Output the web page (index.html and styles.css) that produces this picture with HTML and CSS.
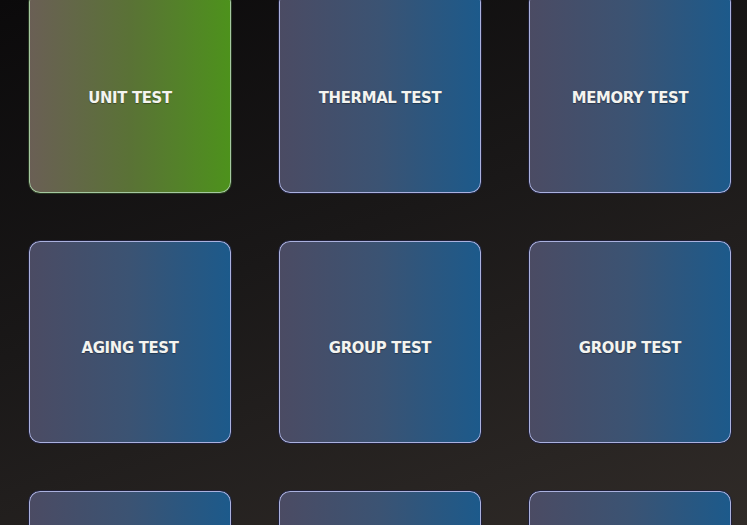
FILE: index.html
```html
<!DOCTYPE html>
<html>
<head>
<meta charset="utf-8">
<link rel="stylesheet" href="styles.css">
</head>
<body>
<div class="grid">
  <div class="tile tile-green"><span class="label">UNIT TEST</span></div>
  <div class="tile"><span class="label">THERMAL TEST</span></div>
  <div class="tile"><span class="label">MEMORY TEST</span></div>
  <div class="tile"><span class="label">AGING TEST</span></div>
  <div class="tile"><span class="label">GROUP TEST</span></div>
  <div class="tile"><span class="label">GROUP TEST</span></div>
  <div class="tile"></div>
  <div class="tile"></div>
  <div class="tile"></div>
</div>
</body>
</html>
```

FILE: styles.css
```css
html, body {
  margin: 0;
  padding: 0;
  height: 100%;
  overflow: hidden;
}
body {
  background: linear-gradient(160deg, #0b0a0b 0%, #1a1818 45%, #302b28 100%);
  font-family: "DejaVu Sans Condensed", "DejaVu Sans", sans-serif;
}
.grid {
  display: grid;
  grid-template-columns: repeat(3, 204px);
  grid-auto-rows: 204px;
  column-gap: 46px;
  row-gap: 46px;
  padding-left: 28px;
  margin-top: -10px;
}
.tile {
  box-sizing: border-box;
  border-radius: 12px;
  border: 1px solid #1f1f38;
  box-shadow: inset 0 0 0 1px #aab1de;
  background: linear-gradient(90deg, #4b4b63 0%, #3b5373 50%, #1c5a8b 100%);
  display: flex;
  align-items: center;
  justify-content: center;
}
.tile-green {
  border-color: #283822;
  box-shadow: inset 0 0 0 1px #a5c8a0;
  background: linear-gradient(90deg, #6a5f55 0%, #5a7236 50%, #4d921c 100%);
}
.label {
  color: #f4f4f0;
  font-weight: bold;
  font-size: 16.5px;
  letter-spacing: -0.3px;
  text-shadow: 0 1px 1px rgba(0,0,0,0.35);
  padding-top: 11px;
}
```
